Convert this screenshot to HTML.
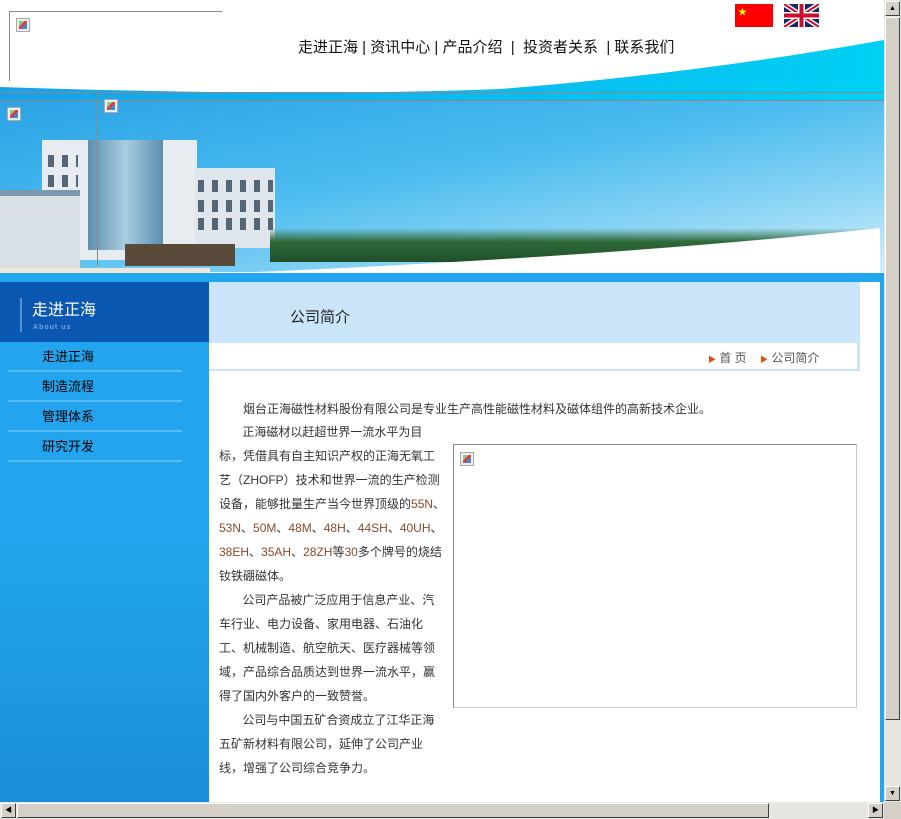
<!DOCTYPE html>
<html><head><meta charset="utf-8"><style>
*{margin:0;padding:0;box-sizing:border-box}
body{width:901px;height:819px;overflow:hidden;background:#fff;font-family:"Liberation Sans","Noto Sans CJK SC",sans-serif;position:relative}
.abs{position:absolute}
.ph{position:absolute;width:14px;height:14px;border:1px solid #aaa;background:linear-gradient(135deg,#8c8 0 40%,#e33 40% 55%,#48c 55%);box-shadow:inset 0 0 0 2px #eee}
.nav{position:absolute;left:298px;top:36px;font-size:15px;color:#111;white-space:nowrap}
.side a{display:block;height:30px;line-height:30px;padding-left:34px;font-size:13px;color:#000;border-bottom:2px solid #55bdf2;margin:0 27px 0 8px;text-decoration:none}
.txt{position:absolute;left:219px;top:397px;font-size:12px;line-height:24px;color:#333;width:230px}
.txt span{color:#8a4a2a}
.win{position:absolute;background:repeating-linear-gradient(90deg,#567 0 6px,transparent 6px 14px);height:12px}
</style></head><body>
<!-- header -->
<div class="abs" style="left:9px;top:11px;width:213px;height:70px;border-left:1px solid #888;border-top:1px solid #888"></div>
<div class="ph" style="left:16px;top:18px"></div>
<div class="nav">走进正海 | 资讯中心 | 产品介绍 &nbsp;| &nbsp;投资者关系 &nbsp;| 联系我们</div>
<div class="abs" style="left:735px;top:4px;width:38px;height:23px;background:#f00"><span style="position:absolute;left:3px;top:1px;color:#ff0;font-size:9px">★</span></div>
<svg class="abs" style="left:784px;top:4px" width="35" height="23" viewBox="0 0 35 23"><rect width="35" height="23" fill="#1a2466"/><path d="M0 0L35 23M35 0L0 23" stroke="#fff" stroke-width="5"/><path d="M0 0L35 23M35 0L0 23" stroke="#c8102e" stroke-width="2"/><path d="M17.5 0V23M0 11.5H35" stroke="#fff" stroke-width="7"/><path d="M17.5 0V23M0 11.5H35" stroke="#c8102e" stroke-width="4"/></svg>
<svg class="abs" style="left:0;top:35px" width="884" height="65"><defs><linearGradient id="g" x1="0" x2="1"><stop offset="0" stop-color="#1aa0e8"/><stop offset="1" stop-color="#00d0f4"/></linearGradient></defs><path d="M0 52 Q300 62 500 54 Q700 38 884 5 V65 H0Z" fill="url(#g)"/></svg>
<div class="abs" style="left:0;top:92px;width:884px;height:1px;background:#888"></div>
<div class="abs" style="left:0;top:100px;width:884px;height:1px;background:#888"></div>
<!-- banner -->
<div class="abs" style="left:0;top:101px;width:884px;height:171px;background:linear-gradient(170deg,#2aa3e6 0%,#4cbcef 45%,#8fd6f5 75%,#d4eefb 100%)"></div>
<div class="abs" style="left:42px;top:140px;width:155px;height:120px;background:#e6ecef"></div>
<div class="abs" style="left:0;top:190px;width:80px;height:80px;background:#d8e0e6;border-top:6px solid #7a99b0"></div>
<div class="abs" style="left:88px;top:140px;width:75px;height:110px;background:linear-gradient(90deg,#5d8faf,#a9cde0,#5d8faf)"></div>
<div class="abs" style="left:195px;top:168px;width:80px;height:80px;background:#e0e7ec"></div>
<div class="win" style="left:48px;top:155px;width:30px"></div><div class="win" style="left:48px;top:175px;width:30px"></div>
<div class="win" style="left:198px;top:180px;width:75px"></div><div class="win" style="left:198px;top:200px;width:75px"></div><div class="win" style="left:198px;top:218px;width:75px"></div>
<div class="abs" style="left:125px;top:244px;width:110px;height:22px;background:#5a4a3a"></div>
<div class="abs" style="left:270px;top:228px;width:610px;height:34px;background:linear-gradient(180deg,transparent,#2f6a38 40%,#1f4f2a)"></div>
<svg class="abs" style="left:0;top:228px" width="884" height="46"><path d="M210 46 Q600 30 880 0 V46Z" fill="#fff"/><path d="M0 40 L210 40 V46 H0Z" fill="#eee8dc"/></svg>
<div class="ph" style="left:7px;top:107px"></div>
<div class="ph" style="left:104px;top:99px"></div>
<div class="abs" style="left:97px;top:92px;width:1px;height:174px;background:#888"></div>
<div class="abs" style="left:0;top:273px;width:884px;height:9px;background:#22a6ee"></div>
<!-- sidebar -->
<div class="abs" style="left:0;top:282px;width:209px;height:520px;background:linear-gradient(180deg,#22a5ee 0%,#22a5ee 50%,#1a8ed8 100%)"></div>
<div class="abs" style="left:0;top:282px;width:209px;height:60px;background:#0b58b3"></div>
<div class="abs" style="left:20px;top:298px;width:2px;height:34px;background:#5c8fd6"></div>
<div class="abs" style="left:32px;top:300px;color:#fff;font-size:16px;line-height:22px">走进正海</div>
<div class="abs" style="left:33px;top:324px;color:#7aa4db;font-size:7px;font-weight:bold;letter-spacing:1px">About us</div>
<div class="abs side" style="left:0;top:342px;width:209px"><a>走进正海</a><a>制造流程</a><a>管理体系</a><a>研究开发</a></div>
<!-- content -->
<div class="abs" style="left:209px;top:282px;width:651px;height:61px;background:#cae5f9"></div>
<div class="abs" style="left:290px;top:306px;font-size:15px;color:#222">公司简介</div>
<div class="abs" style="left:209px;top:343px;width:651px;height:28px;border-bottom:2px solid #cae5f9;border-right:3px solid #cae5f9"></div>
<div class="abs" style="left:708px;top:349px;font-size:12px;color:#555"><span style="color:#e05010;font-size:8px">▶</span> 首 页 &nbsp;&nbsp;&nbsp;<span style="color:#e05010;font-size:8px">▶</span> 公司简介</div>
<div class="abs" style="left:880px;top:282px;width:4px;height:520px;background:#22a6ee"></div>
<div class="abs" style="left:243px;top:397px;font-size:12px;line-height:24px;color:#333;white-space:nowrap">烟台正海磁性材料股份有限公司是专业生产高性能磁性材料及磁体组件的高新技术企业。</div>
<div class="txt" style="top:420px">&nbsp;&nbsp;&nbsp;&nbsp;&nbsp;&nbsp;&nbsp;正海磁材以赶超世界一流水平为目<br>标，凭借具有自主知识产权的正海无氧工<br>艺（ZHOFP）技术和世界一流的生产检测<br>设备，能够批量生产当今世界顶级的<span>55N</span>、<br><span>53N</span>、<span>50M</span>、<span>48M</span>、<span>48H</span>、<span>44SH</span>、<span>40UH</span>、<br><span>38EH</span>、<span>35AH</span>、<span>28ZH</span>等<span>30</span>多个牌号的烧结<br>钕铁硼磁体。<br>&nbsp;&nbsp;&nbsp;&nbsp;&nbsp;&nbsp;&nbsp;公司产品被广泛应用于信息产业、汽<br>车行业、电力设备、家用电器、石油化<br>工、机械制造、航空航天、医疗器械等领<br>域，产品综合品质达到世界一流水平，赢<br>得了国内外客户的一致赞誉。<br>&nbsp;&nbsp;&nbsp;&nbsp;&nbsp;&nbsp;&nbsp;公司与中国五矿合资成立了江华正海<br>五矿新材料有限公司，延伸了公司产业<br>线，增强了公司综合竞争力。</div>
<div class="abs" style="left:453px;top:444px;width:404px;height:264px;border:1px solid #888;border-right-color:#ccc;border-bottom-color:#ccc"></div>
<div class="ph" style="left:460px;top:452px"></div>
<!-- scrollbars -->
<div class="abs" style="left:884px;top:0;width:17px;height:802px;background:#e8e6e0"></div>
<div class="abs" style="left:885px;top:1px;width:15px;height:15px;background:#d4d0c8;border:1px solid #fff;border-right-color:#404040;border-bottom-color:#404040;font-size:7px;text-align:center;line-height:13px">▲</div>
<div class="abs" style="left:885px;top:17px;width:15px;height:703px;background:#d4d0c8;border:1px solid #fff;border-right-color:#404040;border-bottom-color:#404040"></div>
<div class="abs" style="left:885px;top:786px;width:15px;height:15px;background:#d4d0c8;border:1px solid #fff;border-right-color:#404040;border-bottom-color:#404040;font-size:7px;text-align:center;line-height:13px">▼</div>
<div class="abs" style="left:0;top:802px;width:901px;height:17px;background:#e8e6e0"></div>
<div class="abs" style="left:1px;top:803px;width:15px;height:15px;background:#d4d0c8;border:1px solid #fff;border-right-color:#404040;border-bottom-color:#404040;font-size:7px;line-height:13px;text-align:center">◀</div>
<div class="abs" style="left:17px;top:803px;width:752px;height:15px;background:#d4d0c8;border:1px solid #fff;border-right-color:#404040;border-bottom-color:#404040"></div>
<div class="abs" style="left:868px;top:803px;width:15px;height:15px;background:#d4d0c8;border:1px solid #fff;border-right-color:#404040;border-bottom-color:#404040;font-size:7px;line-height:13px;text-align:center">▶</div>
<div class="abs" style="left:884px;top:802px;width:17px;height:17px;background:#d4d0c8"></div>
</body></html>
